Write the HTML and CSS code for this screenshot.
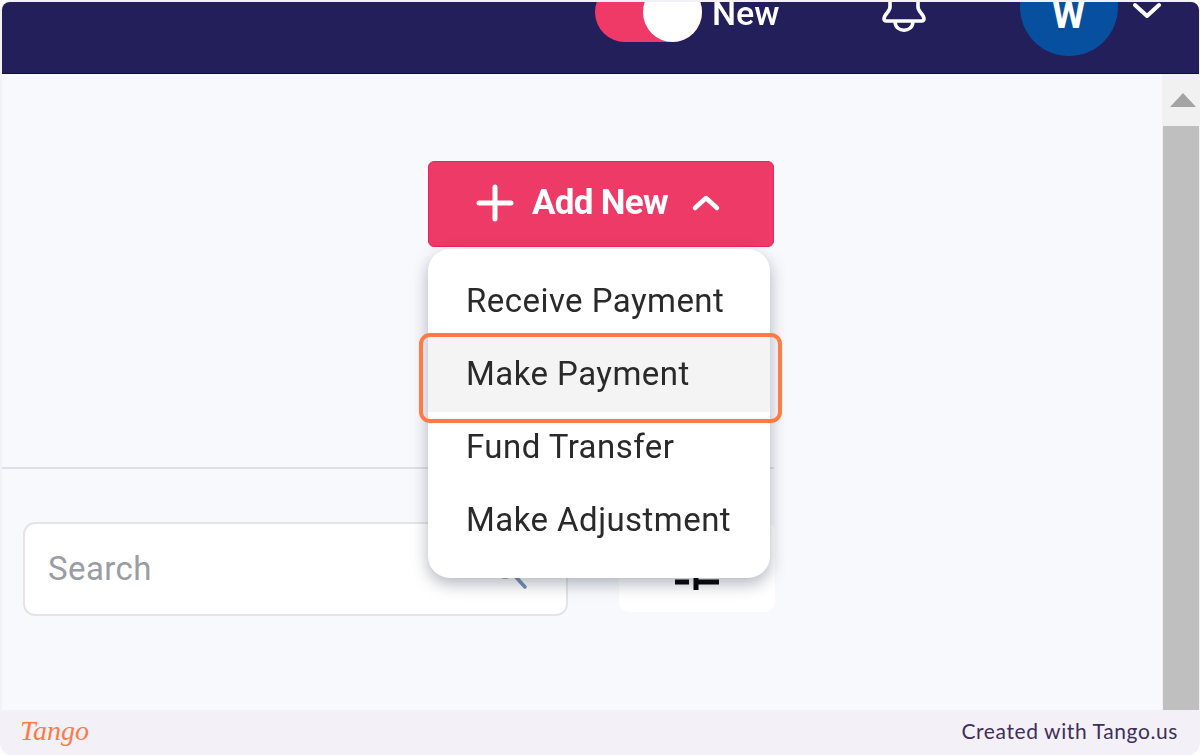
FILE: index.html
```html
<!DOCTYPE html>
<html lang="en">
<head>
<meta charset="utf-8">
<title>Add New menu</title>
<link rel="stylesheet" href="styles.css">
</head>
<body>
<div class="window">
  <div class="shot">
    <header class="topbar">
      <div class="toggle"><span class="knob"></span></div>
      <span class="toggle-label">New</span>
      <svg class="bell" width="46" height="34" viewBox="0 0 46 34" fill="none" stroke="#fff" stroke-width="3.6" stroke-linecap="round" stroke-linejoin="round"><path d="M9 -4V7C9 12 3 14 3 19C3 20 4 21 5 21H41C42 21 43 20 43 19C43 14 37 12 37 7V-4"/><path d="M14 22C15 33 31 33 32 22"/></svg>
      <div class="avatar"><span>W</span></div>
      <svg class="caret" width="28" height="18" viewBox="0 0 28 18" fill="none" stroke="#fff" stroke-width="4" stroke-linecap="round" stroke-linejoin="round"><path d="M2 4L14 15L26 4"/></svg>
    </header>
    <div class="body">
      <main class="content">
        <div class="actions">
          <div class="add-wrap">
            <button class="add-btn">
              <svg width="38" height="38" viewBox="0 0 38 38" stroke="#fff" stroke-width="5" stroke-linecap="round"><path d="M19 3V35M3 19H35"/></svg>
              <span class="add-label">Add New</span>
              <svg class="add-chev" width="30" height="18" viewBox="0 0 30 18" fill="none" stroke="#fff" stroke-width="4.5" stroke-linecap="round" stroke-linejoin="round"><path d="M4 14L15 4L26 14"/></svg>
            </button>
            <ul class="menu">
              <li class="menu-item">Receive Payment</li>
              <li class="menu-item is-hover">Make Payment</li>
              <li class="menu-item">Fund Transfer</li>
              <li class="menu-item">Make Adjustment</li>
              <li class="highlight"></li>
            </ul>
          </div>
        </div>
        <hr class="divider">
        <div class="filters">
          <div class="search">
            <span class="placeholder">Search</span>
            <svg class="search-icon" width="40" height="40" viewBox="0 0 40 40" fill="none" stroke="#6F8FB5" stroke-width="3.5" stroke-linecap="round"><circle cx="14" cy="14" r="11"/><path d="M23 23L34 35"/></svg>
          </div>
          <div class="filter-btn">
            <svg width="46" height="16" viewBox="0 0 46 16" fill="none" stroke="#000" stroke-width="5"><path d="M1 6H15M22 6H45M22 0V14"/></svg>
          </div>
        </div>
      </main>
      <aside class="scrollbar">
        <div class="scroll-up"><svg width="26" height="14" viewBox="0 0 26 14"><path d="M13 0L26 14H0Z" fill="#a3a3a3"/></svg></div>
        <div class="scroll-thumb"></div>
      </aside>
    </div>
  </div>
  <footer class="footer">
    <span class="tango-logo">Tango</span>
    <span class="credit">Created with Tango.us</span>
  </footer>
</div>
</body>
</html>
```
FILE: styles.css
```css
* { box-sizing: border-box; }
html, body { margin: 0; height: 100%; background: #fff; overflow: hidden; }
.window {
  width: 1200px; height: 755px;
  display: flex; flex-direction: column;
  background: #f3f1f7;
  border-radius: 12px;
  overflow: hidden;
  font-family: Roboto, "Liberation Sans", sans-serif;
}
.shot {
  height: 710px;
  padding: 2px 1px 0 2px;
  display: flex; flex-direction: column;
  filter: blur(.45px);
}
.topbar {
  height: 72px; flex: none;
  display: flex; align-items: flex-end;
  background: #221f5a;
  border-bottom: 1px solid #0e0c44;
  border-radius: 8px 8px 0 0;
  padding-left: 593px;
  overflow: hidden;
}
.toggle {
  width: 107px; height: 60px; flex: none;
  margin-bottom: 31px;
  border-radius: 30px;
  background: #ef3a68;
  position: relative;
}
.knob {
  position: absolute; right: 0; top: 0;
  width: 59px; height: 60px;
  border-radius: 50%;
  background: #fff;
}
.toggle-label {
  margin-left: 10px; margin-bottom: 44px;
  font-size: 34px; font-weight: 500; line-height: 32px;
  color: #fff;
}
.bell { margin-left: 101px; margin-bottom: 39px; flex: none; }
.avatar {
  width: 98px; height: 98px; flex: none;
  margin-left: 93px; margin-bottom: 17px;
  border-radius: 50%;
  background: #07509f;
  color: #fff;
  font-size: 38px; font-weight: 700;
  display: flex; justify-content: center; align-items: flex-start;
  padding-top: 40px; line-height: 34px;
}
.caret { margin-left: 15px; margin-bottom: 54px; flex: none; }
.body { flex: 1; min-height: 0; display: flex; }
.content { flex: 1; min-width: 0; background: #f8f9fd; }
.actions {
  width: 772px; padding-top: 87px;
  display: flex; justify-content: flex-end;
}
.add-wrap { position: relative; width: 346px; }
.add-btn {
  width: 346px; height: 86px;
  display: flex; align-items: center; justify-content: flex-start;
  border: 1px solid #e8245c;
  border-radius: 6px;
  background: #ee3a67;
  color: #fff;
  font-family: inherit;
  padding: 0 0 3px 47px;
}
.add-label { margin-left: 18px; font-size: 35px; font-weight: 700; line-height: 40px; letter-spacing: -0.7px; white-space: nowrap; }
.add-chev { margin-left: 23px; }
.menu {
  position: absolute; left: 0; top: 88px;
  width: 342px; margin: 0;
  padding: 15px 0 22px;
  list-style: none;
  background: #fff;
  border-radius: 22px;
  box-shadow: 0 6px 16px rgba(40, 45, 70, .35);
  z-index: 2;
}
.menu-item {
  height: 73px;
  display: flex; align-items: center;
  padding-left: 38px;
  font-size: 33px; letter-spacing: .45px; color: #2a2a2a;
}
.is-hover { background: #f4f4f4; box-shadow: 0 2px 0 #f4f4f4; }
.highlight {
  position: absolute; left: -9px; top: 84px;
  width: 363px; height: 90px;
  border: 4px solid #ff7a45;
  border-radius: 11px;
}
.divider {
  width: 772px; height: 2px; margin: 220px 0 0;
  border: 0; background: #dfe0e5;
}
.filters {
  display: flex; align-items: flex-start; gap: 51px;
  margin-top: 53px; padding-left: 21px;
}
.search {
  width: 545px; height: 94px;
  display: flex; align-items: center;
  padding: 0 0 2px 23px;
  background: #fff;
  border: 2px solid #e3e4e8;
  border-radius: 12px;
  position: relative;
}
.placeholder { font-size: 33px; letter-spacing: .4px; color: #9a9da3; }
.search-icon { position: absolute; right: 35px; top: 28px; }
.filter-btn {
  width: 156px; height: 90px;
  background: #fff; border-radius: 10px;
  display: flex; justify-content: center; align-items: flex-start;
  padding-top: 54px;
}
.scrollbar { width: 37px; flex: none; background: #f1f1f1; display: flex; flex-direction: column; }
.scroll-up { height: 52px; flex: none; display: flex; align-items: center; justify-content: center; padding-left: 5px; }
.scroll-thumb { flex: 1; margin-left: 1px; background: #bfbfbf; }
.footer {
  height: 45px; flex: none;
  display: flex; align-items: center; justify-content: space-between;
  padding: 0 22px 4px 20px;
}
.tango-logo {
  font-family: "Liberation Serif", serif;
  font-style: italic;
  font-size: 28px; color: #ff7a45;
}
.credit {
  font-family: Lato, "Liberation Sans", sans-serif;
  font-size: 21px; letter-spacing: .6px; color: #3e2f5b;
}
```
